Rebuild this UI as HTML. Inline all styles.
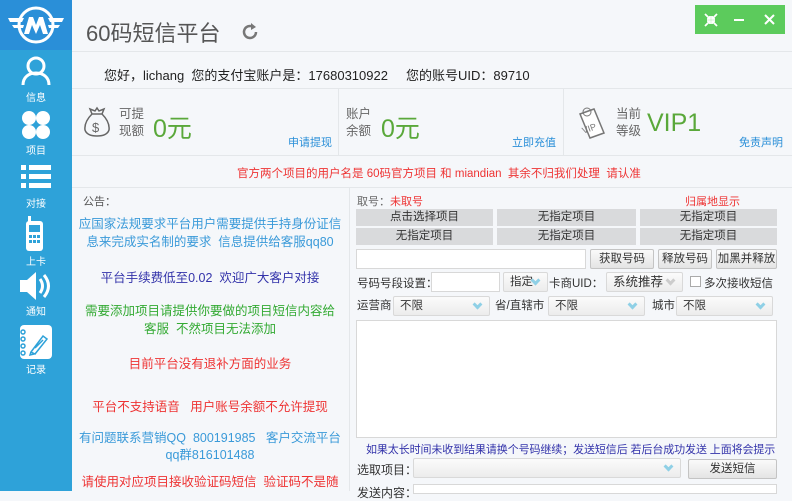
<!DOCTYPE html>
<html><head><meta charset="utf-8"><style>
*{margin:0;padding:0;box-sizing:border-box}
body{width:792px;height:491px;overflow:hidden;background:#f5f7fa;font-family:"Liberation Sans","Noto Sans CJK SC",sans-serif;font-size:12px;color:#333;position:relative}
.a{position:absolute}
.side{left:0;top:0;width:72px;height:491px;background:#2ea2d9}
.logo{left:0;top:0;width:72px;height:50px;background:#2a8fd8}
.nv{left:0;width:72px;text-align:center;color:#fff;font-size:10px}
.line{height:1px;background:#e4e7ea}
.gr{background:#d9dadc;text-align:center;font-size:11.5px;line-height:17px;color:#333;height:17px}
.btn{background:linear-gradient(#fafafa,#e4e4e4);border:1px solid #c4c4c4;border-radius:2px;text-align:center;font-size:11.5px;line-height:18px;height:20px}
.inp{background:#fff;border:1px solid #d8d8d8}
.sel{background:linear-gradient(#fbfbfb,#ececec);border:1px solid #d9d9d9;border-radius:2px;font-size:11.5px;line-height:18px;padding-left:6px;height:20px}
.sel i{position:absolute;right:8px;top:4px;width:7px;height:7px;border-right:3px solid #8fd0e6;border-bottom:3px solid #8fd0e6;transform:rotate(45deg)}
.c{text-align:center}
</style></head><body>
<div class="a side"></div>
<div class="a logo"></div>
<svg class="a" style="left:6px;top:4px" width="60" height="42" viewBox="0 0 60 42"><circle cx="30" cy="21" r="17" fill="none" stroke="#fff" stroke-width="3"/><path d="M2 14h16l-2 4H4zM42 14h16l-2 4H44zM6 21h12l-1 3H8zM42 21h12l-2 3H43z" fill="#fff"/><path d="M18 30l5-17h4l3 8 3-8h4l5 17h-5l-3-9-4 9-4-9-3 9z" fill="#fff"/></svg>
<svg class="a" style="left:21px;top:55px" width="30" height="32" viewBox="0 0 30 32"><circle cx="15" cy="11" r="8" fill="none" stroke="#fff" stroke-width="3"/><path d="M2 30c0-8 6-12 13-12s13 4 13 12" fill="none" stroke="#fff" stroke-width="3"/></svg>
<div class="a" style="left:66px;top:70px;width:0;height:0;border:6px solid transparent;border-right-color:#f5f7fa"></div>
<div class="a nv" style="top:89px">信息</div>
<svg class="a" style="left:20px;top:110px" width="32" height="30"><circle cx="9" cy="8" r="7" fill="#fff"/><circle cx="23" cy="8" r="7" fill="#fff"/><circle cx="9" cy="22" r="7" fill="#fff"/><circle cx="23" cy="22" r="7" fill="#fff"/></svg>
<div class="a nv" style="top:142px">项目</div>
<svg class="a" style="left:21px;top:165px" width="30" height="26"><g fill="#fff"><rect x="0" y="0" width="5" height="5"/><rect x="8" y="0" width="22" height="5"/><rect x="0" y="9" width="5" height="5"/><rect x="8" y="9" width="22" height="5"/><rect x="0" y="18" width="5" height="5"/><rect x="8" y="18" width="22" height="5"/></g></svg>
<div class="a nv" style="top:195px">对接</div>
<svg class="a" style="left:25px;top:216px" width="20" height="36"><rect x="1" y="5" width="17" height="30" rx="3" fill="#fff"/><rect x="3" y="0" width="3" height="6" fill="#fff"/><rect x="4" y="9" width="11" height="7" fill="#2ea2d9"/><g fill="#2ea2d9"><rect x="4" y="19" width="3" height="3"/><rect x="8" y="19" width="3" height="3"/><rect x="12" y="19" width="3" height="3"/><rect x="4" y="24" width="3" height="3"/><rect x="8" y="24" width="3" height="3"/><rect x="12" y="24" width="3" height="3"/></g></svg>
<div class="a nv" style="top:253px">上卡</div>
<svg class="a" style="left:18px;top:270px" width="34" height="32"><path d="M2 10h7l9-8v28l-9-8H2z" fill="#fff"/><path d="M22 9q5 7 0 14M26 5q9 11 0 22" fill="none" stroke="#fff" stroke-width="3"/></svg>
<div class="a nv" style="top:303px">通知</div>
<svg class="a" style="left:17px;top:324px" width="36" height="36"><rect x="3" y="1" width="32" height="34" rx="4" fill="#fff"/><g fill="none" stroke="#2ea2d9" stroke-width="1.5"><circle cx="6" cy="8" r="2"/><circle cx="6" cy="15" r="2"/><circle cx="6" cy="22" r="2"/><circle cx="6" cy="29" r="2"/><path d="M14 28l12-16 4 3-12 15zM14 28l-1 3 4-1M18 24l8-8"/></g></svg>
<div class="a nv" style="top:361px">记录</div>

<div class="a" style="left:86px;top:16px;font-size:22px;color:#555">60码短信平台</div>
<svg class="a" style="left:241px;top:22px" width="20" height="20"><path d="M15 10a6 6 0 1 1-3-5.2" fill="none" stroke="#777" stroke-width="2.5"/><path d="M10 1l5 4-5 3z" fill="#777"/></svg>
<div class="a" style="left:695px;top:5px;width:90px;height:29px;background:#5ccb5c"></div>
<svg class="a" style="left:703px;top:12px" width="16" height="16"><path d="M2 2l5 5M14 2l-5 5M2 14l5-5M14 14l-5-5M4 7h3V4M12 7H9V4M4 9h3v3M12 9H9v3" stroke="#fff" stroke-width="1.8" fill="none"/></svg>
<div class="a" style="left:734px;top:19px;width:10px;height:2px;background:#fff"></div>
<svg class="a" style="left:764px;top:14px" width="11" height="11"><path d="M1 1l9 9M10 1l-9 9" stroke="#fff" stroke-width="2"/></svg>
<div class="a line" style="left:72px;top:51px;width:720px"></div>
<div class="a" style="left:104px;top:65px;font-size:13px;color:#222">您好，lichang&nbsp; 您的支付宝账户是：17680310922&nbsp;&nbsp;&nbsp;&nbsp;&nbsp;您的账号UID：89710</div>
<div class="a line" style="left:72px;top:88px;width:720px"></div>
<div class="a" style="left:338px;top:89px;width:1px;height:66px;background:#e4e7ea"></div>
<div class="a" style="left:563px;top:89px;width:1px;height:66px;background:#e4e7ea"></div>
<svg class="a" style="left:82px;top:106px" width="30" height="32"><path d="M10 8q-8 8-7 16 2 6 12 6t12-6q1-8-7-16zM10 8l-2-5 5 2 2-3 2 3 5-2-2 5" fill="none" stroke="#666" stroke-width="1.5"/><text x="10" y="26" font-size="13" fill="#666">$</text></svg>
<div class="a" style="left:119px;top:106px;font-size:12.5px;color:#666;line-height:17px">可提<br>现额</div>
<div class="a" style="left:153px;top:109px;font-size:25px;color:#5aa83a">0元</div>
<div class="a" style="left:288px;top:134px;font-size:11px;color:#2a8fd8">申请提现</div>
<div class="a" style="left:346px;top:106px;font-size:12.5px;color:#666;line-height:17px">账户<br>余额</div>
<div class="a" style="left:381px;top:109px;font-size:25px;color:#5aa83a">0元</div>
<div class="a" style="left:512px;top:134px;font-size:11px;color:#2a8fd8">立即充值</div>
<svg class="a" style="left:572px;top:104px" width="36" height="36"><path d="M8 10l14-5 10 24-14 5z" fill="#fff" stroke="#777" stroke-width="1.5"/><circle cx="15" cy="8" r="4" fill="none" stroke="#777"/><text x="10" y="28" font-size="9" fill="#777" transform="rotate(-20 16 25)">VIP</text></svg>
<div class="a" style="left:616px;top:106px;font-size:12.5px;color:#666;line-height:17px">当前<br>等级</div>
<div class="a" style="left:647px;top:109px;font-size:25px;color:#5aa83a">VIP1</div>
<div class="a" style="left:739px;top:134px;font-size:11px;color:#2a8fd8">免责声明</div>
<div class="a line" style="left:72px;top:155px;width:720px"></div>
<div class="a" style="left:237px;top:165px;font-size:11.5px;color:#e33">官方两个项目的用户名是 60码官方项目 和 miandian&nbsp; 其余不归我们处理&nbsp; 请认准</div>
<div class="a line" style="left:72px;top:187px;width:720px"></div>
<div class="a" style="left:349px;top:188px;width:1px;height:303px;background:#e4e7ea"></div>

<div class="a" style="left:83px;top:193px;font-size:11px;color:#555">公告：</div>
<div class="a c" style="left:74px;top:215px;width:272px;font-size:12.5px;line-height:18px;color:#3a9ad9">应国家法规要求平台用户需要提供手持身份证信息来完成实名制的要求&nbsp; 信息提供给客服qq80</div>
<div class="a c" style="left:74px;top:267px;width:272px;font-size:12.5px;color:#33a">平台手续费低至0.02&nbsp; 欢迎广大客户对接</div>
<div class="a c" style="left:82px;top:302px;width:256px;font-size:12.5px;line-height:18px;color:#3a3">需要添加项目请提供你要做的项目短信内容给客服&nbsp; 不然项目无法添加</div>
<div class="a c" style="left:74px;top:353px;width:272px;font-size:12.5px;color:#e33">目前平台没有退补方面的业务</div>
<div class="a c" style="left:74px;top:396px;width:272px;font-size:12.5px;color:#e33">平台不支持语音&nbsp;&nbsp; 用户账号余额不允许提现</div>
<div class="a c" style="left:78px;top:430px;width:264px;font-size:12.5px;line-height:17px;color:#3a9ad9">有问题联系营销QQ&nbsp; 800191985&nbsp;&nbsp; 客户交流平台qq群816101488</div>
<div class="a c" style="left:74px;top:471px;width:272px;font-size:12.5px;color:#e33;white-space:nowrap">请使用对应项目接收验证码短信&nbsp; 验证码不是随</div>

<div class="a" style="left:357px;top:193px;font-size:11px;color:#666">取号：<span style="color:#e33">未取号</span></div>
<div class="a" style="left:685px;top:193px;font-size:11px;color:#e33">归属地显示</div>
<div class="a gr" style="left:356px;top:209px;width:137px">点击选择项目</div>
<div class="a gr" style="left:497px;top:209px;width:139px">无指定项目</div>
<div class="a gr" style="left:640px;top:209px;width:137px">无指定项目</div>
<div class="a gr" style="left:356px;top:228px;width:137px">无指定项目</div>
<div class="a gr" style="left:497px;top:228px;width:139px">无指定项目</div>
<div class="a gr" style="left:640px;top:228px;width:137px">无指定项目</div>
<div class="a inp" style="left:356px;top:249px;width:230px;height:20px"></div>
<div class="a btn" style="left:590px;top:249px;width:64px">获取号码</div>
<div class="a btn" style="left:658px;top:249px;width:54px">释放号码</div>
<div class="a btn" style="left:716px;top:249px;width:61px">加黑并释放</div>
<div class="a" style="left:357px;top:275px;font-size:11.5px">号码号段设置：</div>
<div class="a inp" style="left:431px;top:272px;width:69px;height:20px"></div>
<div class="a sel" style="left:503px;top:272px;width:45px">指定<i></i></div>
<div class="a" style="left:549px;top:275px;font-size:11.5px">卡商UID：</div>
<div class="a sel" style="left:606px;top:272px;width:77px;font-size:12.5px">系统推荐<i style="border-color:#ccc"></i></div>
<div class="a" style="left:690px;top:276px;width:11px;height:11px;border:1px solid #aaa;background:#fff"></div>
<div class="a" style="left:704px;top:275px;font-size:11.5px">多次接收短信</div>
<div class="a" style="left:357px;top:297px;font-size:11.5px">运营商</div>
<div class="a sel" style="left:393px;top:296px;width:97px">不限<i></i></div>
<div class="a" style="left:495px;top:297px;font-size:11.5px">省/直辖市</div>
<div class="a sel" style="left:548px;top:296px;width:97px">不限<i></i></div>
<div class="a" style="left:652px;top:297px;font-size:11.5px">城市</div>
<div class="a sel" style="left:676px;top:296px;width:97px">不限<i></i></div>
<div class="a inp" style="left:356px;top:320px;width:421px;height:118px"></div>
<div class="a" style="left:366px;top:441px;font-size:11px;color:#33a;white-space:nowrap;letter-spacing:-0.1px">如果太长时间未收到结果请换个号码继续；发送短信后 若后台成功发送 上面将会提示</div>
<div class="a" style="left:357px;top:461px;font-size:12px">选取项目：</div>
<div class="a sel" style="left:413px;top:458px;width:268px"><i></i></div>
<div class="a btn" style="left:688px;top:459px;width:89px">发送短信</div>
<div class="a" style="left:357px;top:484px;font-size:12px">发送内容：</div>
<div class="a inp" style="left:413px;top:484px;width:364px;height:10px"></div>
</body></html>
